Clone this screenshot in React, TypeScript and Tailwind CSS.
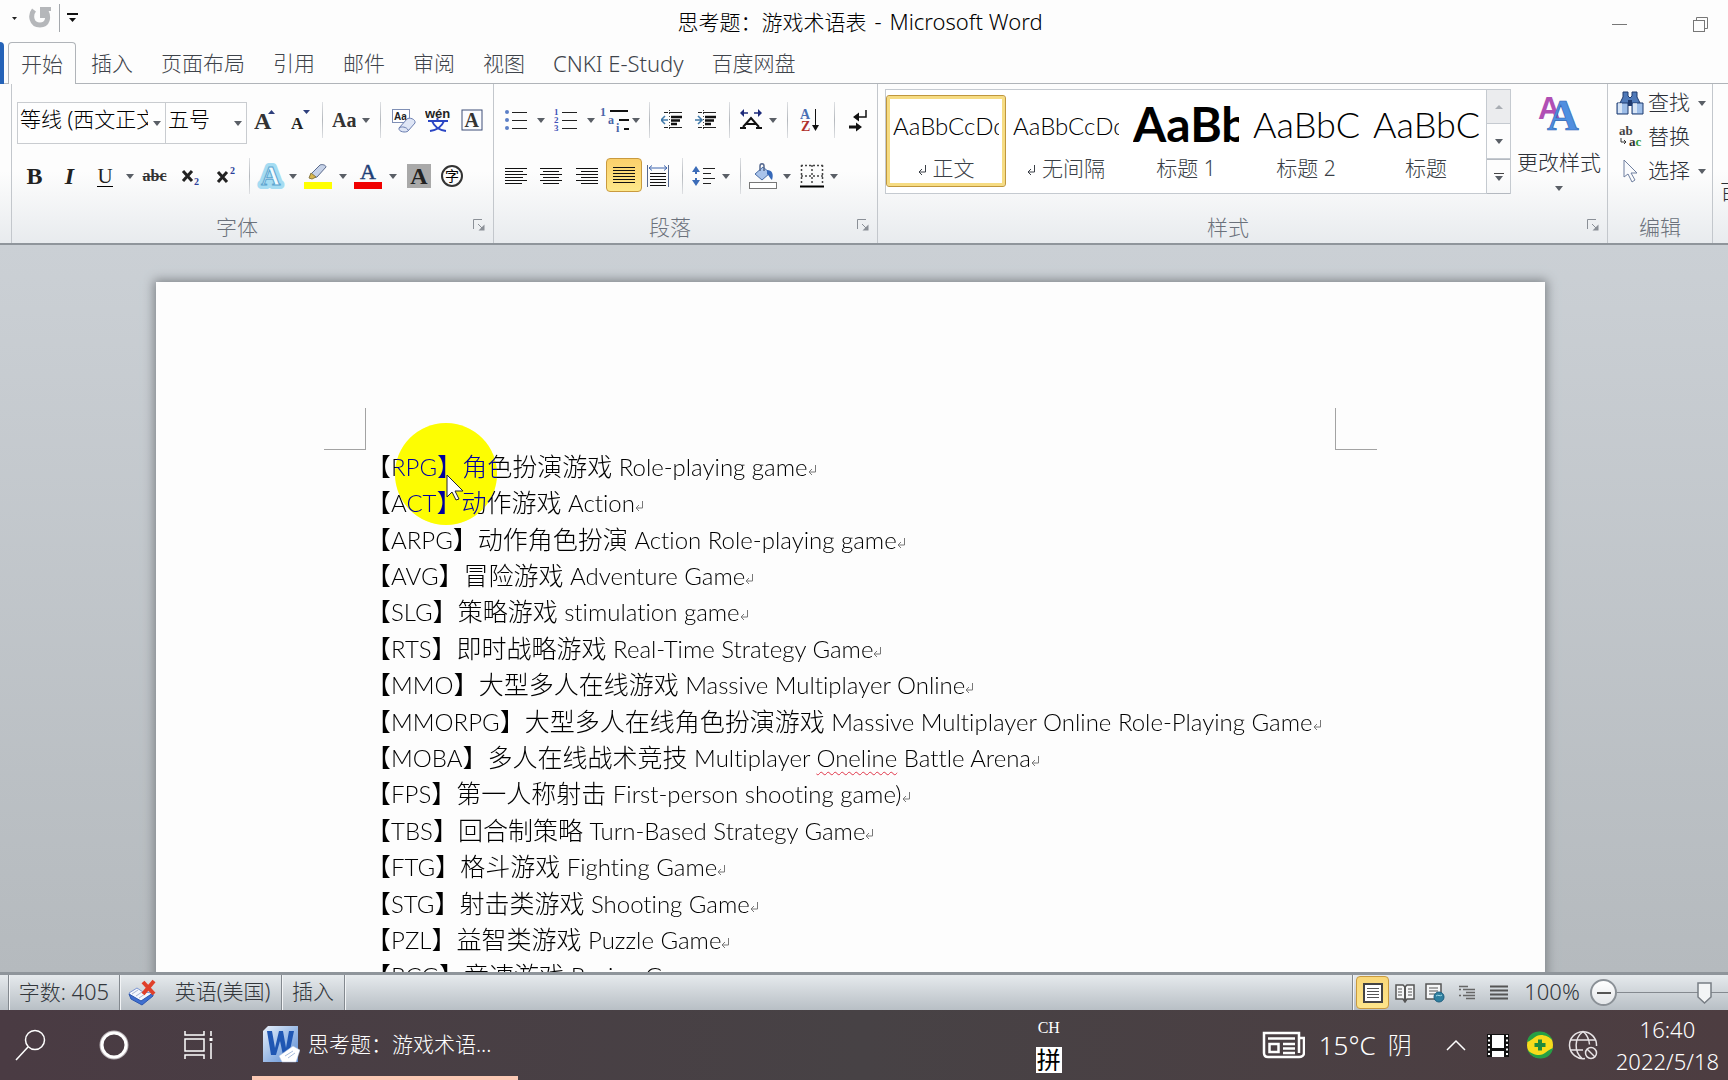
import React from "react";

type Kids = { children?: React.ReactNode };

const terms: { code: string; zh: string; en: React.ReactNode }[] = [
  { code: "RPG", zh: "角色扮演游戏", en: "Role-playing game" },
  { code: "ACT", zh: "动作游戏", en: "Action" },
  { code: "ARPG", zh: "动作角色扮演", en: "Action Role-playing game" },
  { code: "AVG", zh: "冒险游戏", en: "Adventure Game" },
  { code: "SLG", zh: "策略游戏", en: "stimulation game" },
  { code: "RTS", zh: "即时战略游戏", en: "Real-Time Strategy Game" },
  { code: "MMO", zh: "大型多人在线游戏", en: "Massive Multiplayer Online" },
  { code: "MMORPG", zh: "大型多人在线角色扮演游戏", en: "Massive Multiplayer Online Role-Playing Game" },
  {
    code: "MOBA",
    zh: "多人在线战术竞技",
    en: (
      <>
        Multiplayer{" "}
        <span className="underline decoration-[#e0364a] decoration-wavy decoration-1 underline-offset-4">Oneline</span>{" "}
        Battle Arena
      </>
    ),
  },
  { code: "FPS", zh: "第一人称射击", en: "First-person shooting game)" },
  { code: "TBS", zh: "回合制策略", en: "Turn-Based Strategy Game" },
  { code: "FTG", zh: "格斗游戏", en: "Fighting Game" },
  { code: "STG", zh: "射击类游戏", en: "Shooting Game" },
  { code: "PZL", zh: "益智类游戏", en: "Puzzle Game" },
  { code: "RCG", zh: "竞速游戏", en: "Racing Game" },
];

const tabs = ["插入", "页面布局", "引用", "邮件", "审阅", "视图", "CNKI E-Study", "百度网盘"];

const serif = "Liberation Serif, serif";

function Down() {
  return (
    <svg width="8" height="5" viewBox="0 0 8 5" className="shrink-0" aria-hidden="true">
      <path d="M0 0h8L4 5z" fill="#5a5f66" />
    </svg>
  );
}

function Btn({ w, label, children }: { w: string; label: string } & Kids) {
  return (
    <button aria-label={label} title={label} className={"flex h-9 shrink-0 items-center justify-center " + w}>
      {children}
    </button>
  );
}

function Sep({ w }: { w: string }) {
  return (
    <div className={"flex h-9 shrink-0 justify-center " + w}>
      <div className="h-full w-px bg-linear-to-b from-[#dfe1e4] via-[#b4b8bd] to-[#dfe1e4]" />
    </div>
  );
}

function Drop({ w, label }: { w: string; label: string }) {
  return (
    <Btn w={w} label={label}>
      <Down />
    </Btn>
  );
}

function Launcher() {
  return (
    <button aria-label="更多选项" className="absolute right-2 bottom-3">
      <svg width="12" height="12" viewBox="0 0 12 12" fill="none" stroke="#8b9097">
        <path d="M.5 10V.5H9" />
        <path d="M5 5l5 5" />
        <path d="M11.5 5.5v6h-6z" fill="#8b9097" stroke="none" />
      </svg>
    </button>
  );
}

function GroupLabel({ children }: Kids) {
  return <div className="mt-auto pr-9 pb-1 text-center leading-6 text-[#6b717b]">{children}</div>;
}

function Lines({ rows, w = 22 }: { rows: [number, number][]; w?: number }) {
  return (
    <svg width={w} height="18" viewBox={"0 0 " + w + " 18"} stroke="#111" strokeWidth="1">
      {rows.map(([a, b], i) => (
        <path key={i} d={"M" + a + " " + (i * 3 + 1.5) + "H" + b} />
      ))}
    </svg>
  );
}

function FontGroup() {
  return (
    <section aria-label="字体" className="relative flex w-[482px] shrink-0 flex-col border-r border-[#c3c7cc] pl-[5px]">
      <div className="mt-[18px] flex h-[42px]">
        <div className="relative w-[149px] border border-[#c9ccd0] bg-white/60">
          <select aria-label="字体名称" className="h-[33px] w-full appearance-none overflow-hidden bg-transparent pr-[17px] pl-0.5 text-black">
            <option>等线 (西文正文)</option>
          </select>
          <span className="pointer-events-none absolute top-[18px] right-1 flex">
            <Down />
          </span>
        </div>
        <div className="relative w-[81px] border border-l-0 border-[#c9ccd0] bg-white/60">
          <select aria-label="字号" className="h-[33px] w-full appearance-none bg-transparent pl-0.5 text-black">
            <option>五号</option>
          </select>
          <span className="pointer-events-none absolute top-[18px] right-1 flex">
            <Down />
          </span>
        </div>
        <Btn w="w-9" label="增大字体">
          <svg width="22" height="24" viewBox="0 0 22 24">
            <text x="0" y="21" fontFamily={serif} fontWeight="700" fontSize="24" fill="#333">A</text>
            <path d="M14 6h7l-3.500-4z" fill="#2e3f7d" />
          </svg>
        </Btn>
        <Btn w="w-[35px]" label="缩小字体">
          <svg width="20" height="24" viewBox="0 0 20 24">
            <text x="0" y="21" fontFamily={serif} fontWeight="700" fontSize="17" fill="#222">A</text>
            <path d="M12 2h7l-3.500 4z" fill="#2e3f7d" />
          </svg>
        </Btn>
        <Sep w="w-2" />
        <Btn w="w-9" label="更改大小写">
          <svg width="24" height="22" viewBox="0 0 24 22">
            <text x="0" y="18" fontFamily={serif} fontWeight="700" fontSize="20" fill="#333">Aa</text>
          </svg>
        </Btn>
        <Drop w="w-2" label="大小写选项" />
        <Sep w="w-5" />
        <Btn w="w-[26px]" label="清除格式">
          <svg width="25" height="25" viewBox="0 0 25 25">
            <rect x="1.500" y="1.500" width="17" height="13" fill="#fff" stroke="#7f8fb5" />
            <text x="3" y="12" fontFamily="Liberation Sans, sans-serif" fontWeight="700" fontSize="10" fill="#222">Aa</text>
            <path d="M8 20l8-9c2-2 9 0 8 4l-7 8c-2 2-10 1-9-3z" fill="#dfe6f6" stroke="#6a7db0" />
            <path d="M8 20c2-2 8-1 9 2" fill="none" stroke="#6a7db0" />
          </svg>
        </Btn>
        <Btn w="w-11" label="拼音指南">
          <svg width="26" height="26" viewBox="0 0 26 26">
            <text x="0" y="11" fontFamily="Liberation Sans, sans-serif" fontWeight="700" fontSize="13" fill="#222">wén</text>
            <path d="M3 14h20M12.500 11v3M7 14c2 5 6 9 14 10M19 14c-2 5-6 9-14 10" fill="none" stroke="#2a45c4" strokeWidth="2" />
          </svg>
        </Btn>
        <Btn w="w-6" label="字符边框">
          <svg width="22" height="22" viewBox="0 0 22 22">
            <rect x="1" y="1" width="20" height="20" fill="#fbfcff" stroke="#3f4f78" />
            <text x="3.500" y="18" fontFamily={serif} fontWeight="700" fontSize="20" fill="#333">A</text>
          </svg>
        </Btn>
      </div>
      <div className="mt-[14px] flex">
        <Btn w="w-[35px]" label="加粗">
          <span className="font-[Liberation_Serif] text-2xl font-bold text-[#222]">B</span>
        </Btn>
        <Btn w="w-[35px]" label="倾斜">
          <span className="font-[Liberation_Serif] text-2xl font-bold text-[#222] italic">I</span>
        </Btn>
        <Btn w="w-9" label="下划线">
          <span className="border-b border-black font-[Liberation_Serif] text-[21px] leading-5 text-[#222]">U</span>
        </Btn>
        <Drop w="w-[14px]" label="下划线选项" />
        <Btn w="w-[35px]" label="删除线">
          <span className="font-[Liberation_Serif] text-base font-bold text-[#333] line-through">abc</span>
        </Btn>
        <Btn w="w-9" label="下标">
          <svg width="20" height="20" viewBox="0 0 20 20">
            <path d="M3 5l9 10M12 5L3 15" stroke="#222" strokeWidth="3" />
            <text x="14" y="19" fontFamily={serif} fontWeight="700" fontSize="10" fill="#2b3f9a">2</text>
          </svg>
        </Btn>
        <Btn w="w-9" label="上标">
          <svg width="20" height="20" viewBox="0 0 20 20">
            <path d="M2 6l9 10M11 6L2 16" stroke="#222" strokeWidth="3" />
            <text x="14" y="8" fontFamily={serif} fontWeight="700" fontSize="10" fill="#2b3f9a">2</text>
          </svg>
        </Btn>
        <Sep w="w-[10px]" />
        <Btn w="w-[34px]" label="文本效果">
          <svg width="30" height="28" viewBox="0 0 30 28">
            <text x="5" y="23" fontFamily={serif} fontWeight="700" fontSize="27" fill="#a5dcf2" stroke="#a5dcf2" strokeWidth="8" strokeLinejoin="round">A</text>
            <text x="5" y="23" fontFamily={serif} fontWeight="700" fontSize="27" fill="#f3fbff" stroke="#5aa5d0" strokeWidth="1">A</text>
          </svg>
        </Btn>
        <Drop w="w-[10px]" label="文本效果选项" />
        <Btn w="w-10" label="突出显示">
          <svg width="28" height="26" viewBox="0 0 28 26">
            <path d="M7 11L16 2c2-1 6 0 6 2L13 14c-3 1-6 1-6-3z" fill="#c6d2e8" stroke="#5b6b8c" />
            <path d="M5 15l2-5 5 4-4 2z" fill="#d9b64a" stroke="#8a7a42" />
            <rect x="0" y="19" width="28" height="7" fill="#ff0" />
          </svg>
        </Btn>
        <Drop w="w-[10px]" label="突出显示颜色" />
        <Btn w="w-10" label="字体颜色">
          <svg width="28" height="26" viewBox="0 0 28 26">
            <text x="6" y="16" fontFamily={serif} fontWeight="400" fontSize="22" fill="#1f3f77" stroke="#1f3f77" strokeWidth="0.5">A</text>
            <rect x="0" y="19" width="28" height="7" fill="#f00000" />
          </svg>
        </Btn>
        <Drop w="w-[10px]" label="字体颜色选项" />
        <Btn w="w-[42px]" label="字符底纹">
          <span className="flex h-6 w-6 items-center justify-center bg-[#a9a9a9] font-[Liberation_Serif] text-2xl font-bold text-[#222]">A</span>
        </Btn>
        <Btn w="w-6" label="带圈字符">
          <span className="flex h-[22px] w-[22px] items-center justify-center rounded-full border-2 border-[#333] text-sm leading-none font-normal text-black">字</span>
        </Btn>
      </div>
      <GroupLabel>字体</GroupLabel>
      <Launcher />
    </section>
  );
}

function ParagraphGroup() {
  return (
    <section aria-label="段落" className="relative flex w-96 shrink-0 flex-col border-r border-[#c3c7cc] pl-[5px]">
      <div className="mt-[18px] flex h-[42px]">
        <Btn w="w-[34px]" label="项目符号">
          <svg width="24" height="22" viewBox="0 0 24 22" stroke="#222">
            {[3, 11, 19].map((y) => (
              <g key={y}>
                <circle cx="3" cy={y} r="2" fill="#5b7fc7" stroke="none" />
                <path d={"M8 " + (y + 0.5) + "h15"} />
              </g>
            ))}
          </svg>
        </Btn>
        <Drop w="w-4" label="项目符号库" />
        <Btn w="w-[34px]" label="编号">
          <svg width="24" height="24" viewBox="0 0 24 24">
            {[4, 12, 20].map((y, i) => (
              <g key={y}>
                <text x="0" y={y + 3} fontFamily={serif} fontWeight="700" fontSize="9" fill="#4152b8">{i + 1}</text>
                <path d={"M8 " + (y + 0.5) + "h15"} stroke="#222" />
              </g>
            ))}
          </svg>
        </Btn>
        <Drop w="w-[15px]" label="编号库" />
        <Btn w="w-[34px]" label="多级列表">
          <svg width="30" height="26" viewBox="0 0 30 26">
            <g fontFamily={serif} fontWeight="700" fontSize="12" fill="#4a66a8">
              <text x="0" y="9">1</text>
              <text x="8" y="17">a</text>
              <text x="16" y="25">i</text>
            </g>
            <path d="M10 4h18M19 13h10M24 22h5" stroke="#111" strokeWidth="2" />
          </svg>
        </Btn>
        <Drop w="w-2" label="多级列表库" />
        <Sep w="w-[18px]" />
        <Btn w="w-7" label="减少缩进量">
          <svg width="22" height="20" viewBox="0 0 22 20">
            <path d="M3 2.500h18M3 17.500h18" stroke="#222" strokeDasharray="4 1 13" />
            <path d="M10 7h11M10 10.500h9M10 14h6" stroke="#111" strokeWidth="2.500" />
            <path d="M8.500 0v20" stroke="#444" strokeDasharray="1 2" />
            <path d="M0 10h7M4 6l-4 4 4 4" fill="none" stroke="#3f78a8" strokeWidth="1.500" />
          </svg>
        </Btn>
        <Btn w="w-10" label="增加缩进量">
          <svg width="22" height="20" viewBox="0 0 22 20">
            <path d="M3 2.500h18M3 17.500h18" stroke="#222" strokeDasharray="4 1 13" />
            <path d="M10 7h11M10 10.500h9M10 14h6" stroke="#111" strokeWidth="2.500" />
            <path d="M8.500 0v20" stroke="#444" strokeDasharray="1 2" />
            <path d="M0 10h7M3 6l4 4-4 4" fill="none" stroke="#3f78a8" strokeWidth="1.500" />
          </svg>
        </Btn>
        <Sep w="w-[6px]" />
        <Btn w="w-[38px]" label="中文版式">
          <svg width="24" height="22" viewBox="0 0 24 22">
            <path d="M2 4h7M15 4h7" stroke="#1d2a7a" strokeWidth="1.500" />
            <path d="M5 0L1 4l4 4zM19 0l4 4-4 4z" fill="#1d2a7a" />
            <path d="M4 18L12 9l8 9M7 15h10" fill="none" stroke="#111" strokeWidth="2" />
            <path d="M1 19h6M17 19h6" stroke="#111" strokeWidth="2" />
          </svg>
        </Btn>
        <Drop w="w-[6px]" label="中文版式选项" />
        <Sep w="w-[22px]" />
        <Btn w="w-6" label="排序">
          <svg width="20" height="24" viewBox="0 0 20 24">
            <text x="0" y="11" fontFamily={serif} fontWeight="700" fontSize="14" fill="#4a6fb5">A</text>
            <text x="1" y="23" fontFamily={serif} fontWeight="700" fontSize="14" fill="#b0302c">Z</text>
            <path d="M15.500 1v19" stroke="#111" />
            <path d="M12 17h7l-3.500 6z" fill="#111" />
          </svg>
        </Btn>
        <Sep w="w-6" />
        <Btn w="w-6" label="显示编辑标记">
          <svg width="20" height="24" viewBox="0 0 20 24" fill="none" stroke="#111" strokeWidth="2">
            <path d="M18 2v7h-9" strokeWidth="1.500" />
            <path d="M11 4.500v9L5 9zM8 14.500v9l6-4.500z" fill="#111" stroke="none" />
            <path d="M1 19h8" strokeWidth="3" />
          </svg>
        </Btn>
      </div>
      <div className="mt-[14px] flex">
        <Btn w="w-[34px]" label="左对齐">
          <Lines rows={[[0, 22], [0, 18], [0, 22], [0, 18], [0, 22], [0, 17]]} />
        </Btn>
        <Btn w="w-9" label="居中">
          <Lines rows={[[0, 22], [3, 19], [0, 22], [3, 19], [0, 22], [3, 19]]} />
        </Btn>
        <Btn w="w-9" label="右对齐">
          <Lines rows={[[0, 22], [5, 22], [0, 22], [5, 22], [0, 22], [5, 22]]} />
        </Btn>
        <button
          aria-label="两端对齐"
          aria-pressed="true"
          className="mx-px flex h-[34px] w-9 shrink-0 items-center justify-center rounded-sm border border-[#c99a3e] bg-linear-to-b from-[#fbd06b] to-[#fde88a]"
        >
          <Lines rows={[[0, 22], [0, 22], [0, 22], [0, 22], [0, 22], [0, 22]]} />
        </button>
        <Btn w="w-[30px]" label="分散对齐">
          <svg width="22" height="24" viewBox="0 0 22 24">
            <path d="M.5 1v22M21.500 1v22" stroke="#56698f" />
            <path d="M2 4h18M5 1.500L2 4l3 2.500M17 1.500L20 4l-3 2.500" fill="none" stroke="#3c64ae" />
            <path d="M3 9.500h16M3 12.500h16M3 15.500h16M3 18.500h16M3 21.500h16" stroke="#111" />
          </svg>
        </Btn>
        <Sep w="w-[18px]" />
        <Btn w="w-[26px]" label="行距">
          <svg width="24" height="20" viewBox="0 0 24 20">
            <path d="M4 3v5M4 12v5" stroke="#3c6cb8" strokeWidth="2" />
            <path d="M0 6l4-6 4 6zM0 14l4 6 4-6z" fill="#3c6cb8" />
            <path d="M11 2.500h12M11 7.500h8M11 12.500h12M11 17.500h8" stroke="#222" />
          </svg>
        </Btn>
        <Drop w="w-[18px]" label="行距选项" />
        <Sep w="w-[10px]" />
        <Btn w="w-9" label="底纹">
          <svg width="28" height="27" viewBox="0 0 28 27">
            <path d="M6 11l8-7 7 6-8 7z" fill="#a9c3ea" stroke="#4a6da5" />
            <path d="M11 8V3c0-3 4-3 4 0v5" fill="none" stroke="#56698f" strokeWidth="1.500" />
            <path d="M18 7c5 0 7 4 5 10-2-1-3-5-5-6z" fill="#3668b8" />
            <rect x=".5" y="19.500" width="27" height="6" fill="#fff" stroke="#777" />
          </svg>
        </Btn>
        <Drop w="w-3" label="底纹颜色" />
        <Btn w="w-[38px]" label="下框线">
          <svg width="24" height="24" viewBox="0 0 24 24">
            <path d="M1 1.500h22M1 12h22M1.500 1v20M12 1v20M22.500 1v20" stroke="#444" strokeWidth="1.500" strokeDasharray="2 2" />
            <path d="M0 22.500h24" stroke="#000" strokeWidth="2" />
          </svg>
        </Btn>
        <Drop w="w-[6px]" label="框线选项" />
      </div>
      <GroupLabel>段落</GroupLabel>
      <Launcher />
    </section>
  );
}

function ReturnMark({ className }: { className: string }) {
  return (
    <svg width="9" height="12" viewBox="0 0 9 12" fill="none" className={"inline-block " + className} stroke="currentColor" aria-hidden="true">
      <path d="M7.500 1v7H1M4 5L1 8l3 3" />
    </svg>
  );
}

function StyleCard({ sample, sampleClass, name, mark, selected }: { sample: string; sampleClass: string; name: string; mark?: boolean; selected?: boolean }) {
  return (
    <button
      className={
        "mt-[5px] flex h-[92px] w-[120px] shrink-0 flex-col rounded-[3px] border " +
        (selected ? "border-[#c0973d] shadow-[inset_0_0_0_3px_#f6dc83]" : "border-transparent")
      }
    >
      <span className={"ml-[6px] flex h-[60px] w-[106px] items-center overflow-hidden font-[Lato] whitespace-nowrap text-black " + sampleClass}>
        {sample}
      </span>
      <span className="w-full text-center leading-6 text-[#3a3f46]">
        {mark && <ReturnMark className="mr-1.5 text-[#3a3f46]" />}
        {name}
      </span>
    </button>
  );
}

function StylesGroup() {
  return (
    <section aria-label="样式" className="relative flex min-w-0 flex-1 flex-col border-r border-[#c3c7cc] pl-[7px]">
      <div className="flex">
        <div className="mt-[5px] flex h-[105px] min-w-0 flex-1 overflow-hidden border border-[#c5cad0] bg-white">
          <StyleCard sample="AaBbCcDd" sampleClass="text-2xl" name="正文" mark selected />
          <StyleCard sample="AaBbCcDd" sampleClass="text-2xl" name="无间隔" mark />
          <StyleCard sample="AaBb" sampleClass="pb-1 text-5xl font-bold" name="标题 1" />
          <StyleCard sample="AaBbC" sampleClass="pb-1 text-4xl" name="标题 2" />
          <StyleCard sample="AaBbC" sampleClass="pb-1 text-4xl" name="标题" />
        </div>
        <div className="mt-[5px] grid h-[105px] w-6 shrink-0 grid-rows-3 border-r border-[#c5cad0]">
          <button aria-label="上一行" className="flex items-center justify-center border-y border-[#c5cad0] bg-[#ebecee]">
            <svg width="8" height="4" viewBox="0 0 8 4"><path d="M0 4h8L4 0z" fill="#a9adb3" /></svg>
          </button>
          <button aria-label="下一行" className="flex items-center justify-center border-b border-[#c5cad0]">
            <Down />
          </button>
          <button aria-label="其他" className="flex flex-col items-center justify-center gap-0.5 border-y border-[#b4b9c0]">
            <span className="h-px w-[10px] bg-[#444]" />
            <Down />
          </button>
        </div>
        <button className="flex w-24 shrink-0 flex-col items-center text-[#2b2f36]">
          <svg width="42" height="42" viewBox="0 0 42 42" className="mt-2">
            <text x="0" y="27" fontFamily="Liberation Sans, sans-serif" fontWeight="700" fontSize="31" fill="#b04fb4">A</text>
            <text x="9" y="38" fontFamily={serif} fontWeight="700" fontSize="44" fill="#4f8fe0" stroke="#2f66b5" strokeWidth="0.7">A</text>
          </svg>
          <span className="mt-4 leading-6 whitespace-nowrap">更改样式</span>
          <span className="mt-3"><Down /></span>
        </button>
      </div>
      <GroupLabel>样式</GroupLabel>
      <Launcher />
    </section>
  );
}

function EditGroup() {
  return (
    <section aria-label="编辑" className="flex w-[105px] shrink-0 flex-col border-r border-[#c3c7cc] pl-2 text-[#2b2f36]">
      <button className="mt-0.5 flex h-[34px] items-center">
        <svg width="28" height="24" viewBox="0 0 28 24" className="mr-1 shrink-0">
          <path d="M7 1h5v4l2 2 2-2V1h5v5l4 8H3l4-8z" fill="#4f79b8" stroke="#1f3a6e" />
          <path d="M1 12h11v11H1zM16 12h11v11H16z" fill="#9dbde8" stroke="#1f3a6e" />
          <path d="M2 12h4v10H2zM17 12h4v10h-4z" fill="#fff" opacity=".6" />
          <path d="M12 9h4v6h-4z" fill="#1f3a6e" />
        </svg>
        <span className="mr-2">查找</span>
        <Down />
      </button>
      <button className="flex h-[34px] items-center">
        <svg width="28" height="24" viewBox="0 0 28 24" className="mr-1 shrink-0">
          <text x="3" y="10" fontFamily={serif} fontWeight="700" fontSize="13" fill="#444">ab</text>
          <text x="13" y="21" fontFamily={serif} fontWeight="700" fontSize="13" fill="#333">a<tspan fill="#2f9a3c">c</tspan></text>
          <path d="M5 13v4h5M8 15l2 2-2 2" fill="none" stroke="#333" />
        </svg>
        <span>替换</span>
      </button>
      <button className="flex h-[34px] items-center">
        <svg width="28" height="24" viewBox="0 0 28 24" className="mr-1 shrink-0">
          <path d="M8 1v17l4-3 4 8 3-2-4-7h6z" fill="#fafbfd" stroke="#6f7f9f" />
        </svg>
        <span className="mr-2">选择</span>
        <Down />
      </button>
      <div className="mt-auto pr-2 pb-1 text-center leading-6 text-[#6b717b]">编辑</div>
    </section>
  );
}

function StatusSep() {
  return <div className="h-full w-px shrink-0 bg-[#83898f] shadow-[1px_0_0_#f2f4f6]" />;
}

function StatusBar() {
  return (
    <footer className="flex h-[38px] shrink-0 items-stretch border-t-[3px] border-[#8f959b] bg-linear-to-b from-[#e6eaed] to-[#b8bfc5] text-[#33373c]">
      <div className="w-2" />
      <StatusSep />
      <button className="w-[110px] pb-1 leading-8">
        字数: <span className="text-[22px]">405</span>
      </button>
      <StatusSep />
      <button className="flex items-center px-2" aria-label="校对">
        <svg width="28" height="28" viewBox="0 0 28 28">
          <path d="M1 14l8-5 6 4 10 1-11 9-11-5z" fill="#f4f7fd" stroke="#7d97d2" />
          <path d="M1 15l2 5 11 6 11-9v-3l-12 8z" fill="#3f6fd0" stroke="#2c56ad" />
          <path d="M4 15l6-4M8 17l6-4M11 19l6-4" stroke="#a9b7d4" />
          <path d="M15 3l11 12M26 2L15 15" stroke="#e0402a" strokeWidth="4" />
        </svg>
      </button>
      <button className="w-[117px] pb-1 leading-8">英语(美国)</button>
      <StatusSep />
      <button className="w-[62px] pb-1 leading-8">插入</button>
      <StatusSep />
      <div className="flex-1" />
      <StatusSep />
      <div className="flex items-center pl-[3px]">
        <button aria-label="页面视图" className="flex h-[33px] w-[33px] items-center justify-center rounded-sm border border-[#c99a3e] bg-linear-to-b from-[#f9d779] to-[#fde58a]">
          <svg width="20" height="20" viewBox="0 0 20 20">
            <rect x="1" y="1" width="18" height="18" fill="#fff" stroke="#444" strokeWidth="2" />
            <path d="M4 5.500h12M4 8.500h12M4 11.500h12M4 14.500h12" stroke="#555" />
          </svg>
        </button>
        <button aria-label="阅读版式" className="flex w-8 justify-center">
          <svg width="20" height="20" viewBox="0 0 20 20">
            <path d="M1 2h7l2 2 2-2h7v14h-7l-2 3-2-3H1z" fill="#f4f5f6" stroke="#555" strokeWidth="1.500" />
            <path d="M10 4v15" stroke="#555" strokeWidth="2" />
            <path d="M3 6h4M3 9h4M3 12h4M13 6h4M13 9h4M13 12h4" stroke="#555" />
          </svg>
        </button>
        <button aria-label="Web 版式" className="flex w-7 justify-center">
          <svg width="20" height="20" viewBox="0 0 20 20">
            <rect x="1" y="1" width="15" height="15" fill="#f6f7f8" stroke="#555" strokeWidth="1.500" />
            <path d="M4 5h9M4 8h9M4 11h6" stroke="#555" />
            <circle cx="14" cy="14" r="5" fill="#2f7f9f" stroke="#1f5f80" />
            <path d="M11 13c2-2 4 1 6-1" stroke="#a6dce8" fill="none" />
          </svg>
        </button>
        <button aria-label="大纲视图" className="flex w-9 justify-center">
          <svg width="16" height="16" viewBox="0 0 16 16" stroke="#666">
            <path d="M0 1.500h9M4 4.500h12M7 7.500h9M4 10.500h12M0 10.500h2M7 13.500h9M0 4.500h2" strokeWidth="1.500" />
          </svg>
        </button>
        <button aria-label="草稿" className="flex w-[27px] justify-center">
          <svg width="18" height="16" viewBox="0 0 18 16" stroke="#555">
            <path d="M0 1.500h18M0 5.500h18M0 9.500h18M0 13.500h18" strokeWidth="2" />
          </svg>
        </button>
        <button className="w-[78px] pb-0.5 pl-0.5 text-[22px]">100%</button>
        <button aria-label="缩小" className="flex h-[27px] w-[27px] items-center justify-center rounded-full border-2 border-[#8b9197] bg-linear-to-b from-white to-[#e4e7ea]">
          <span className="h-0.5 w-3.5 bg-[#555]" />
        </button>
        <div className="relative flex w-[111px] items-center">
          <div className="h-px w-full bg-[#84898f]" />
          <button aria-label="显示比例滑块" className="absolute top-1/2 right-4 -translate-y-1/2">
            <svg width="15" height="22" viewBox="0 0 15 22">
              <path d="M1 1h13v14l-6.500 6L1 15z" fill="#f3f5f6" stroke="#777d84" strokeWidth="1.500" />
            </svg>
          </button>
        </div>
      </div>
    </footer>
  );
}

function Taskbar() {
  return (
    <nav className="flex h-[70px] shrink-0 items-stretch bg-linear-to-r from-[#4a3b43] via-[#474245] to-[#4d3d41] text-white">
      <button aria-label="搜索" className="flex w-[60px] items-center justify-center">
        <svg width="31" height="32" viewBox="0 0 31 32" fill="none" stroke="#fff" strokeWidth="1.500">
          <circle cx="20" cy="11" r="9.500" />
          <path d="M13 18L1 31" />
        </svg>
      </button>
      <button aria-label="Cortana" className="flex w-[107px] items-center justify-center">
        <svg width="30" height="30" viewBox="0 0 30 30" fill="none">
          <circle cx="15" cy="15" r="13" stroke="#b9b2b6" strokeWidth="3" />
          <circle cx="15" cy="15" r="12" stroke="#fff" strokeWidth="3" />
        </svg>
      </button>
      <button aria-label="任务视图" className="flex w-[63px] items-center justify-center">
        <svg width="32" height="28" viewBox="0 0 32 28" fill="none" stroke="#fff" strokeWidth="1.500">
          <path d="M2 0v4h19V0M2 28v-4h19v4" />
          <rect x="2" y="8" width="19" height="12" />
          <path d="M28 0v5M28 12v16" />
          <path d="M28 7v3" strokeWidth="3" />
        </svg>
      </button>
      <div className="w-[22px]" />
      <button className="flex w-[266px] items-center border-b-4 border-[#fbc9b5] pt-0.5 pl-[10px]">
        <svg width="38" height="38" viewBox="0 0 38 38" className="mr-2 shrink-0">
          <defs>
            <linearGradient id="wd" x1="0" y1="0" x2="1" y2="1">
              <stop offset="0" stopColor="#e9f1fb" />
              <stop offset=".6" stopColor="#8fb2e3" />
              <stop offset="1" stopColor="#5c8bd0" />
            </linearGradient>
          </defs>
          <path d="M6 1h30v36H1V6z" fill="url(#wd)" />
          <path d="M5 6h5l3 17 4-17h4l3 17 3-17h5l-5 24h-6l-3-14-4 14H9z" fill="#1f56b3" />
          <path d="M17 31l14-10 7 4-4 12H20z" fill="#fff" stroke="#a8bddd" strokeWidth=".5" />
          <path d="M23 31l8-5M26 33l7-5" stroke="#a8bddd" />
        </svg>
        <span className="pt-0.5">思考题：游戏术语...</span>
      </button>
      <div className="flex-1" />
      <div className="flex flex-col items-center gap-[5px] pt-1">
        <span className="font-[Liberation_Serif] text-base leading-7">CH</span>
        <span className="flex h-[26px] w-[26px] items-center justify-center bg-white text-2xl leading-none font-normal text-black">拼</span>
      </div>
      <div className="w-[200px]" />
      <button className="flex items-center text-2xl" aria-label="天气">
        <svg width="43" height="28" viewBox="0 0 43 28" fill="none" stroke="#fff" strokeWidth="2.500" className="mr-[14px]">
          <path d="M37 7V2H2v20c0 3 2 4 4 4h31c3 0 5-2 5-4V7h-5v15" />
          <path d="M6 7.500h27M21 13h12M21 17.500h12M21 22h12" />
          <rect x="7.500" y="13" width="9" height="8" />
        </svg>
        <span className="mr-3 text-[26px]">15°C</span>
        <span>阴</span>
      </button>
      <button aria-label="显示隐藏的图标" className="ml-[34px] flex items-center">
        <svg width="20" height="12" viewBox="0 0 20 12" fill="none" stroke="#fff" strokeWidth="1.500">
          <path d="M1 11l9-9 9 9" />
        </svg>
      </button>
      <button aria-label="视频" className="ml-[21px] flex items-center">
        <svg width="22" height="23" viewBox="0 0 22 23">
          <path d="M0 0h22v23H0z" fill="#111" />
          <path d="M5 1h12v13H5zM5 17h12v6H5z" fill="#fff" />
          <path d="M2 1v22M20 1v22" stroke="#fff" strokeWidth="2" strokeDasharray="2 2.500" />
        </svg>
      </button>
      <button aria-label="安全卫士" className="ml-[17px] flex items-center">
        <svg width="28" height="28" viewBox="0 0 28 28">
          <circle cx="14" cy="14" r="13" fill="#f7dc1c" />
          <path d="M1 11C2 4 8 0 14 .5c6 0 11 4 13 9.500-3-4-8-6-12-6-6 0-8 5-14 7z" fill="#25a045" />
          <path d="M27 17c-1 7-7 11-13 10.500C8 27.500 3 23.500 1 18c3 4 8 6 12 6 6 0 8-5 14-7z" fill="#25a045" />
          <path d="M14 8.500v11M8.500 14h11" stroke="#1e8a3c" strokeWidth="4" />
        </svg>
      </button>
      <button aria-label="网络" className="ml-[14px] flex items-center">
        <svg width="30" height="30" viewBox="0 0 30 30" fill="none" stroke="#e8e4e6" strokeWidth="1.500">
          <path d="M17 28.500A13.500 13.500 0 1 1 28.500 16" />
          <path d="M14 28.500c-8-7-8-20 1-27 4 3 6 8 6.500 13M2 10h26M2 20h13" />
          <circle cx="23" cy="23" r="5.500" />
          <path d="M19 19l8 8" />
        </svg>
      </button>
      <div className="mr-[9px] ml-[18px] flex flex-col items-center pt-[3px] text-[22px]">
        <span className="leading-8">16:40</span>
        <span className="leading-8">2022/5/18</span>
      </div>
    </nav>
  );
}

export default function App() {
  return (
    <div className="flex h-screen flex-col overflow-hidden bg-[#fdfdfd] font-['Noto_Sans','Noto_Sans_CJK_SC',sans-serif] text-[21px] font-light text-[#3f444b]">
      <header className="flex h-[42px] shrink-0 items-center">
        <div className="flex flex-1 items-center gap-[13px] pb-[6px] pl-3">
          <svg width="5" height="3" viewBox="0 0 5 3"><path d="M0 0h5L2.500 3z" fill="#222" /></svg>
          <button aria-label="重复" className="-ml-0.5">
            <svg width="24" height="22" viewBox="0 0 24 22" fill="none">
              <path d="M6 3c-4 5-3 15 6 15 8 0 9-8 6-14" stroke="#b5b7ba" strokeWidth="5" />
              <path d="M12 0h11v4h-5v7h-6z" fill="#b5b7ba" />
            </svg>
          </button>
          <div className="-ml-1.5 h-7 w-px bg-[#a4a8ad]" />
          <button aria-label="自定义快速访问工具栏" className="-ml-1.5">
            <svg width="11" height="10" viewBox="0 0 11 10"><path d="M0 1h11" stroke="#111" strokeWidth="2" /><path d="M2 5h7l-3.500 4z" fill="#111" /></svg>
          </button>
        </div>
        <h1 className="pt-0.5 text-black">
          思考题：游戏术语表<span className="ml-2 text-[22px]">-</span>
          <span className="ml-2 text-[22px]">Microsoft Word</span>
        </h1>
        <div className="flex flex-1 items-center justify-end gap-[66px] pt-[6px] pr-5">
          <button aria-label="最小化" className="h-px w-[15px] bg-[#777]" />
          <button aria-label="还原">
            <svg width="15" height="15" viewBox="0 0 15 15" fill="none" stroke="#777">
              <rect x=".5" y="3.500" width="11" height="11" />
              <path d="M3.500 3.500v-3h11v11h-3" />
            </svg>
          </button>
        </div>
      </header>

      <div className="flex h-[42px] shrink-0 items-end" role="tablist">
        <div className="h-full w-1 shrink-0 rounded-tr-sm bg-[#2563b8]" />
        <div className="h-full w-1 shrink-0 border-b border-[#b9bcc0]" />
        <button role="tab" aria-selected="true" className="h-full w-[68px] shrink-0 rounded-t-sm border border-b-0 border-[#b0b4b9] pt-0.5">
          开始
        </button>
        <div className="flex h-full flex-1 items-center gap-7 border-b border-[#b0b4b9] pt-0.5 pl-[15px]">
          {tabs.map((t) => (
            <button key={t} role="tab" aria-selected="false" className={"whitespace-nowrap " + (t.startsWith("CNKI") ? "text-[22px]" : "")}>
              {t}
            </button>
          ))}
        </div>
      </div>

      <div className="flex h-[161px] shrink-0 border-b-2 border-[#8f959b] bg-linear-to-b from-[#fdfdfd] from-55% to-[#e8ebee]">
        <div className="w-3 shrink-0 border-r border-[#c3c7cc]" />
        <FontGroup />
        <ParagraphGroup />
        <StylesGroup />
        <EditGroup />
        <section className="w-[15px] shrink-0 overflow-hidden pt-[92px] pl-[7px] text-[#2b2f36]">
          <span className="whitespace-nowrap">百</span>
        </section>
      </div>

      <main className="min-h-0 flex-1 overflow-hidden bg-linear-to-b from-[#cbd0d5] to-[#b5babe] pt-[37px] pr-[183px] pl-[156px]">
        <article className="relative isolate h-[760px] bg-[#fdfdfd] pt-[126px] shadow-[0_0_10px_2px_#7f8488]">
          <div className="flex justify-between px-[168px]">
            <div className="h-[42px] w-[42px] border-r border-b border-[#a3a3a3]" />
            <div className="h-[42px] w-[42px] border-b border-l border-[#a3a3a3]" />
          </div>
          <div className="-mt-0.5 grid h-[546px] auto-rows-fr items-center pl-[210px] font-[Lato,'Noto_Sans_CJK_SC',sans-serif] text-2xl leading-9 whitespace-nowrap text-black [font-variant-ligatures:none]">
            {terms.map((t) => (
              <p key={t.code}>
                <span className="text-[25px]">【</span>
                {t.code}
                <span className="text-[25px]">】{t.zh}</span> {t.en}
                <ReturnMark className="text-[#777]" />
              </p>
            ))}
          </div>
          <div className="pointer-events-none absolute top-[141px] left-[239px] h-[102px] w-[102px] rounded-full bg-[#0000ff] mix-blend-difference" />
          <div className="pointer-events-none absolute top-[141px] left-[239px] h-[102px] w-[102px] rounded-full bg-[#ffffa0] mix-blend-multiply" />
          <svg width="18" height="28" viewBox="0 0 18 28" className="absolute top-[192px] left-[290px]" aria-hidden="true">
            <path d="M1 1v22l5-5 4 8 3-1-4-8h8z" fill="#fff" stroke="#223" />
          </svg>
        </article>
      </main>

      <StatusBar />
      <Taskbar />
    </div>
  );
}
